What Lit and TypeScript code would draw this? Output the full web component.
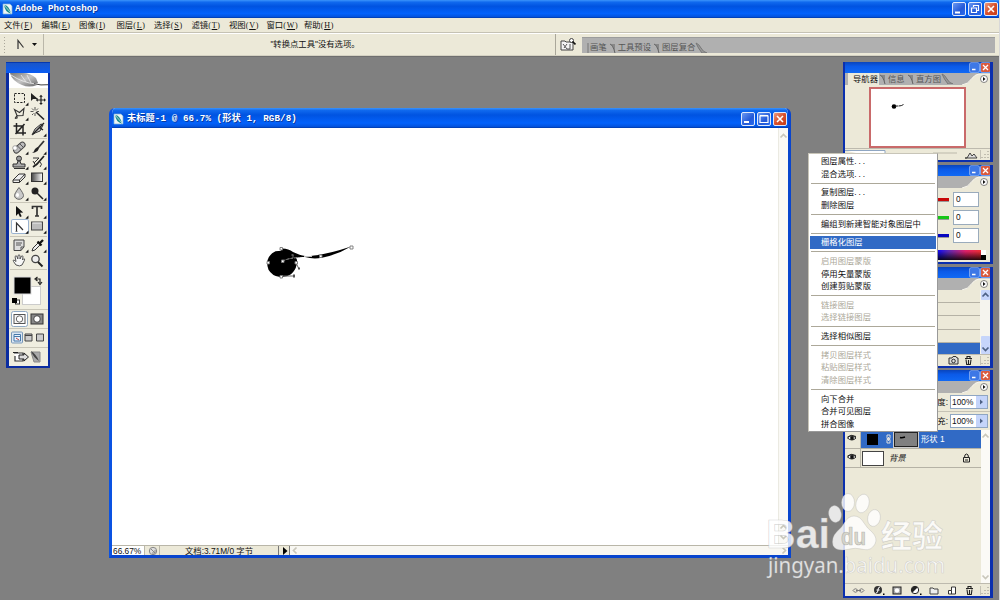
import { LitElement, html, svg, css } from "lit";
import { customElement } from "lit/decorators.js";
import { classMap } from "lit/directives/class-map.js";

const corner = svg`<path d="M18 15v-4l-4 4z" fill="#111"/>`;
const tool = (body: unknown, fly = true, on = false) => html`<span class=${classMap({ tool: true, on })}>
  <svg width="18" height="15" viewBox="0 0 18 15">${body}${fly ? svg`<g transform="translate(3.4 3) scale(.78)">${corner}</g>` : ""}</svg></span>`;

const groups = [
  [
    tool(svg`<rect x="3.5" y="2.5" width="10" height="9" fill="none" stroke="#222" stroke-dasharray="2.2 1.3"/>`),
    tool(svg`<path d="M2 2v8l2-2 5 0z" fill="#222"/><path d="M12 5v8M8 9h8" stroke="#222" stroke-width="1.2"/><path d="M12 3.8l1.8 2h-3.6zM12 14l1.8-2h-3.6zM6.8 9l2-1.7v3.4zM17 9l-2-1.7v3.4z" fill="#222"/>`, false),
    tool(svg`<path d="M4 12.5l2-3-2.5-6 5 3 4.500-4-1 7-5 .3q-2 .5-1 1.500t-2 1.200" fill="none" stroke="#333" stroke-width="1.1"/>`),
    tool(svg`<path d="M7 6l8 7.500" stroke="#222" stroke-width="1.6"/><path d="M6 1v3M6 7v3M1.500 5.500h3M8 5.500h2M3 2.500l2 2M9 2.500l-2 2M3 9l1.500-1.500" stroke="#444" stroke-width=".9"/>`, false),
    tool(svg`<path d="M5.500 1v10H15M2.500 4H12v9.500M4.500 12L13.500 2" fill="none" stroke="#222" stroke-width="1.5"/>`, false),
    tool(svg`<path d="M3 13l3-6 6-5 2 1-3 6-5 2z" fill="#ccc" stroke="#333"/><path d="M4 12L15 1M10 5l4 3" stroke="#222" stroke-width="1.400"/>`),
  ],
  [
    tool(svg`<rect x="1.500" y="5" width="13.500" height="5.500" rx="2.700" transform="rotate(-42 8 7.500)" fill="#bbb" stroke="#444"/><path d="M6 5.500l4.500 4.500M8.500 3.500l4 4" stroke="#555"/><circle cx="4" cy="8" r="2.300" fill="#fff" stroke="#777" stroke-width=".6"/>`),
    tool(svg`<path d="M15 1L9 8" stroke="#333" stroke-width="1.800"/><path d="M3 13q2-1 3-4l2.500-2L10 8.500 8.500 11Q6 13 3 13" fill="#222"/>`),
    tool(svg`<circle cx="8" cy="3.500" r="2.500" fill="#999" stroke="#333"/><path d="M7 6h2l1 3h4v3H2V9h4z" fill="#aaa" stroke="#333"/><path d="M3 13.500h11" stroke="#333"/>`),
    tool(svg`<path d="M15 1L8 9l-4 3" stroke="#222" stroke-width="1.700" fill="none"/><path d="M4 3h6L5 8M11 7q3 2 0 5M4 6l3 5" stroke="#333" fill="none"/>`),
    tool(svg`<path d="M2 10l6-6h6l-5.500 6zM2 10v2.500h6.500V10M8.500 12.500L14 7V4" fill="#eee" stroke="#333"/>`),
    tool(svg`<defs><linearGradient id="gr"><stop stop-color="#444"/><stop offset="1" stop-color="#fff"/></linearGradient></defs><rect x="2.500" y="3" width="11" height="8.500" fill="url(#gr)" stroke="#333"/>`),
    tool(svg`<path d="M8 1.500q4.500 6 4.500 8a4.400 3.700 0 0 1-9 0q0-2 4.500-8" fill="#c9c9c9" stroke="#666"/><ellipse cx="6.500" cy="9" rx="1.500" ry="2" fill="#fff"/>`),
    tool(svg`<circle cx="6" cy="5" r="3.500" fill="#222"/><path d="M8 7l6 6" stroke="#222" stroke-width="1.500"/>`),
  ],
  [
    tool(svg`<path d="M5 2v10l2.300-2.500L9 13l1.700-.8L9 8.800l3.200-.2z" fill="#111"/>`),
    tool(svg`<path d="M3.500 5V2.500h9V5M8 2.500v9M6 12h4" fill="none" stroke="#333" stroke-width="1.700"/>`),
    tool(svg`<path d="M5.500 12V4l6.500 7" fill="none" stroke="#333" stroke-width="1.200"/><path d="M4.500 12.500h2" stroke="#777"/>`, true, true),
    tool(svg`<rect x="2.500" y="3" width="11" height="8" fill="#bcbcbc" stroke="#444"/><path d="M3.500 4h9" stroke="#eee"/>`),
  ],
  [
    tool(svg`<path d="M3 2h10v7l-3 3.500H3z" fill="#ddd" stroke="#444"/><path d="M10 12.500V9h3M5 5h6M5 7h5" fill="none" stroke="#555"/>`),
    tool(svg`<path d="M3 13l1-3 6-6 2 2-6 6z" fill="#eee" stroke="#333"/><path d="M8.500 3.500l4 4M11 5l3-3" stroke="#111" stroke-width="2.300"/>`),
    tool(svg`<path d="M5 12L2.500 8.500Q1.500 7 3 7l2 1.500L4 3.500q1-1.500 2 0L6.800 6 7 2.500q1-1.300 2 0L9 6l1.500-3q1.500-.6 1.500.8L11.500 7l1.300-1.300q1.200 0 .7 1.500L11 12q-2 1.800-6 0" fill="#f7f7f7" stroke="#555"/>`, false),
    tool(svg`<circle cx="6.500" cy="6" r="3.700" fill="#eee" stroke="#444" stroke-width="1.300"/><path d="M9 9l4.500 4.500" stroke="#222" stroke-width="2"/>`, false),
  ],
];

const paletteMenu = html`<svg class="pmenu" width="28" height="12" viewBox="0 0 28 12">
  <path d="M0 12Q6 11 9 6.500 13 1 17 1H28V12z" fill="#ece9d8"/><path d="M0 12Q6 11 9 6.500 13 1 17 1H28" fill="none" stroke="#f8f6ee"/>
  <circle cx="22" cy="6" r="3.500" fill="#fff" stroke="#666" stroke-width=".8"/><path d="M21 4l2.500 2-2.500 2z" fill="#111"/></svg>`;
const winBtns = html`<i class="mini"><svg width="9" height="9" viewBox="0 0 9 9"><path d="M2 6.500h3.500" stroke="#fff" stroke-width="1.600"/></svg></i>
  <i class="mini red"><svg width="9" height="9" viewBox="0 0 9 9"><path d="M2 2l5 5M7 2L2 7" stroke="#fff" stroke-width="1.300"/></svg></i>`;
const grip = html`<svg class="grip" width="9" height="9" viewBox="0 0 9 9"><path d="M7 1v1M7 4v1M7 7v1M4 4v1M4 7v1M1 7v1" stroke="#aaa79a" stroke-width="1.300"/></svg>`;
const chev = (up: boolean, c = "#c9c7bb") => html`<svg width="9" height="10" viewBox="0 0 9 10"><path d=${up ? "M1.500 6.500l3-3 3 3" : "M1.500 3.500l3 3 3-3"} fill="none" stroke=${c} stroke-width="1.700"/></svg>`;
const psIcon = html`<svg class="ps" width="11" height="12" viewBox="0 0 11 12"><path d="M1 1h7l2 2v8H1z" fill="#eef5f5" stroke="#7bb3d8" stroke-width=".7"/><path d="M2 2q5 0 7 8.500-6-1-7-8.500" fill="#188c8c"/><path d="M2 2l7 8" stroke="#fff" stroke-width=".6"/></svg>`;
const trash = svg`<path d="M2 3.500h7M4 3V1.500h3V3M3 4.500l.7 5h3.600L8 4.500M5.500 5v4" fill="none" stroke="#222" stroke-width="1.100"/>`;
const eye = html`<svg width="10" height="8" viewBox="0 0 10 8"><path d="M.5 4q4-4.500 8.500 0-4 4-8.500 0" fill="#fff" stroke="#222"/><circle cx="5" cy="4" r="1.900" fill="#111"/><path d="M.5 3Q4 0 9 2.500" fill="none" stroke="#222"/></svg>`;

const menus: [string, string][] = [["文件", "F"], ["编辑", "E"], ["图像", "I"], ["图层", "L"], ["选择", "S"], ["滤镜", "T"], ["视图", "V"], ["窗口", "W"], ["帮助", "H"]];
const context: [string, string?][][] = [
  [["图层属性..."], ["混合选项..."]],
  [["复制图层..."], ["删除图层"]],
  [["编组到新建智能对象图层中"]],
  [["栅格化图层", "sel"]],
  [["启用图层蒙版", "off"], ["停用矢量蒙版"], ["创建剪贴蒙版"]],
  [["链接图层", "off"], ["选择链接图层", "off"]],
  [["选择相似图层"]],
  [["拷贝图层样式", "off"], ["粘贴图层样式", "off"], ["清除图层样式", "off"]],
  [["向下合并"], ["合并可见图层"], ["拼合图像"]],
];

@customElement("app-root")
export class AppRoot extends LitElement {
  static styles = css`
    :host { display: block; width: 1000px; height: 600px; overflow: hidden; }
    * { box-sizing: border-box; }
    svg { display: block; flex: none; }
    .screen { position: relative; width: 1000px; height: 600px; background: #808080; font: 8.33px/12px "Liberation Sans", "Noto Sans CJK SC", sans-serif; color: #111; display: flex; flex-direction: column; overflow: hidden; border-right: 1px solid #d8d8d8; white-space: nowrap; }
    .title { height: 18px; flex: none; display: flex; align-items: center; padding: 0 1px 0 2px; gap: 2px; color: #fff; background: linear-gradient(#3b94fb 0, #1069ee 12%, #0053e1 35%, #0362fb 75%, #0354e0 92%, #0038a8); }
    .name { font: bold 9.2px/14px "Liberation Mono", "Noto Sans CJK SC", monospace; text-shadow: 1px 1px 0 #0a3a9c; flex: 1; }
    .btn { width: 14px; height: 14px; border: 1px solid #dfe9fb; border-radius: 2px; background: linear-gradient(135deg, #6a98f2, #2359d8 60%, #2b6bee); }
    .btn.red { background: linear-gradient(135deg, #eb9a80, #d8502c 50%, #c53c17); }
    .menubar { height: 15px; flex: none; background: #ece9d8; border-bottom: 1px solid #c5c2b4; display: flex; padding: 1px 0 0 4px; }
    .menubar span { width: 37.5px; }
    .menubar b { font: 8px/12px "Liberation Serif", serif; letter-spacing: .8px; }
    .options { height: 23px; flex: none; background: #ece9d8; border-top: 1px solid #fff; border-bottom: 1px solid #d5d2c3; display: flex; align-items: center; box-shadow: 0 1px 0 #6f6f6f; }
    .opt-tool { width: 44px; height: 21px; border-right: 1px solid #bab7a9; padding: 2px 0 0 4px; display: flex; }
    .opt-text { width: 512px; height: 21px; border-right: 1px solid #aaa79a; text-align: center; line-height: 21px; padding-left: 31px; }
    .opt-file { width: 26px; padding-left: 4px; }
    .well { width: 413px; height: 16px; background: #b0b0b0; border-top: 1px solid #9c9c9c; display: flex; align-items: flex-end; color: #555; padding-left: 5px; }
    .well span { line-height: 11px; }
    .win { position: absolute; display: flex; flex-direction: column; }
    .toolbox { left: 6px; top: 62px; width: 44px; height: 306px; border: solid #0a2ca0; border-width: 0 2px 2px 3px; background: #f0eee0; }
    .tb-title { height: 11px; flex: none; background: linear-gradient(#1a55c8, #0a5cf4); margin: 0 -2px 0 -3px; border-top: 1px solid #0538b0; }
    .feather { height: 15px; background: #fff; flex: none; overflow: hidden; }
    .grid { display: grid; grid-template-columns: 18px 18px; grid-auto-rows: 15.3px; padding: 1px 0 1px 1px; border-bottom: 1px solid #c9c6b8; margin: 0 1px; }
    .grid.first { padding-top: 3px; }
    .tool { display: block; width: 18px; height: 15px; }
    .tool.on { background: #fff; box-shadow: inset 0 0 0 1px #9ab2cf; border-radius: 2px; }
    .swatches { height: 40px; padding: 6px 3px 0; border-bottom: 1px solid #c9c6b8; flex: none; }
    .masks { height: 19px; display: flex; gap: 1px; align-items: center; padding-left: 2px; border-bottom: 1px solid #c9c6b8; flex: none; }
    .masks.last { border: 0; height: 17px; }
    .doc { left: 109px; top: 108px; width: 682px; height: 450px; border: 3px solid #0845ce; border-top: 0; border-left-color: #0a52e2; border-radius: 6px 6px 0 0; background: #fff; overflow: hidden; }
    .doc-title { height: 20px; margin: 0 -3px; padding: 2px 4px 0 4px; gap: 2px; }
    .doc-title .name { letter-spacing: .1px; padding-left: 1px; }
    .body { flex: 1; display: flex; min-height: 0; }
    .canvas { flex: 1; background: #fff; }
    .vscroll { width: 10px; background: #faf9f5; border-left: 1px solid #ebeae2; display: flex; flex-direction: column; justify-content: space-between; padding: 3px 0; flex: none; }
    .status { height: 10px; flex: none; display: flex; background: #ece9d8; line-height: 10px; border-top: 1px solid #b9b6a8; }
    .status .zoom { width: 32px; background: #fff; padding-left: 1px; }
    .status .ic { width: 16px; border: solid #b9b6a8; border-width: 0 1px; padding-left: 3px; }
    .status .info { width: 118px; text-align: center; }
    .status .go { width: 12px; border: solid #777; border-width: 0 1px; padding: 1px 0 0 4px; }
    .status .hs { flex: 1; background: #f8f7f2; display: flex; justify-content: space-between; }
    .turn { display: block; transform: rotate(-90deg); }
    .pal { left: 843px; width: 150px; border: solid #0a2fae; border-width: 0 3px 2px 2px; background: #ece9d8; overflow: hidden; }
    .nav { top: 62px; height: 100px; }
    .color { top: 165px; height: 99px; }
    .history { top: 267px; height: 101px; }
    .layers { top: 370px; height: 228px; }
    .ptitle { height: 11px; flex: none; margin: 0 -3px 0 -2px; background: linear-gradient(#0a45bc, #0b5ae8 40%, #1069f4); display: flex; gap: 2px; justify-content: flex-end; align-items: center; padding-right: 3px; }
    .mini { width: 9px; height: 9px; border-radius: 1px; background: #3e78e6; box-shadow: 0 0 0 .6px #bcd0f5; overflow: hidden; }
    .mini.red { background: #d95b3f; }
    .tabs { height: 12px; flex: none; display: flex; background: #b0b0b0; align-items: stretch; color: #555; line-height: 12px; }
    .pmenu { margin-left: auto; }
    .tab-on { background: #ece9d8; color: #111; padding-left: 5px; width: 31px; margin-left: 3px; }
    .thumbwrap { flex: 1; display: flex; padding: 2px 0 0 24px; }
    .thumb { width: 97px; height: 61px; border: 2px solid #c96a6a; background: #fff; }
    .pfoot { height: 12px; flex: none; display: flex; align-items: center; border-top: 1px solid #bdbaae; }
    .pfoot .grip { border-left: 1px solid #c5c2b5; margin-left: auto; width: 10px; }
    .srows { flex: 1; display: flex; flex-direction: column; padding-top: 4px; gap: 3px; }
    .srow { display: flex; height: 15px; align-items: center; justify-content: flex-end; padding-right: 11px; gap: 4px; }
    .bar { width: 18px; height: 4px; border-bottom: 1px solid #999; }
    .bar.r { background: #c80808; } .bar.g { background: #18c618; } .bar.b { background: #0606c0; }
    .num { width: 26px; height: 15px; background: #fff; border: 1px solid #9aabbc; padding-left: 2px; line-height: 13px; }
    .ramp { height: 10px; margin: 0 4px 2px 5px; display: flex; background: linear-gradient(transparent 10%, rgba(0,0,0,.85)), linear-gradient(90deg, #f00, #ff0, #0f0, #0ff 50%, #00f 63%, #5a2ab8 72%, #e0206a 85%, #f03030 97%); }
    .ramp i { margin-left: auto; width: 5px; background: linear-gradient(#fff 50%, #000 50%); }
    .hist { flex: 1; display: flex; min-height: 0; }
    .hrows { flex: 1; display: flex; flex-direction: column; }
    .hrow { height: 13.2px; border-bottom: 1px solid #b5b2a5; }
    .hrow.on { background: #316ac5; border: 0; flex: 1; }
    .hsc { width: 10px; background: #f5f4ee; display: flex; flex-direction: column; align-items: center; }
    .hsc span { background: #c6d5fb; width: 9px; border-radius: 1px; }
    .sp { flex: 1; }
    .field { height: 19px; flex: none; display: flex; justify-content: flex-end; align-items: center; padding-right: 2px; gap: 1px; border-bottom: 1px solid #c5c2b5; }
    .field.low { height: 18px; border: 0; }
    .pct { width: 38px; height: 14px; border: 1px solid #8fa6c2; background: #fff; display: flex; line-height: 12px; padding-left: 1px; margin-left: 1px; }
    .pct i { margin-left: auto; width: 11px; background: #c4d4fa; padding: 2px 0 0 2px; }
    .llist { flex: 1; display: flex; min-height: 0; }
    .lrows { flex: 1; }
    .lsc { width: 9px; background: #fbfaf6; display: flex; flex-direction: column; justify-content: space-between; padding: 1px 0; }
    .lrow { height: 19px; display: flex; align-items: center; border-bottom: 1px solid #b5b2a5; }
    .eye { width: 16px; height: 18px; padding: 4px 0 0 2px; border-right: 1px solid #bbb8aa; flex: none; background: #ece9d8; }
    .lrow.on { background: #316ac5; color: #fff; }
    .lt { width: 22px; height: 15px; border: 1px solid #444; background: #fff; margin: 0 5px 0 1px; }
    .lrow.on .lt { width: 11px; height: 11px; background: #000; margin: 0 8px 0 6px; border: 0; }
    .mask { width: 24px; height: 15px; background: #808080; border: 1px solid #222; outline: 1px solid #ccc; margin: 0 3px; }
    .lock { margin-left: auto; margin-right: 10px; }
    .lfoot { height: 13px; }
    .lfoot .icons { flex: 1; display: flex; justify-content: space-between; padding: 0 5px 0 7px; }
    .ctx { left: 808px; top: 153px; width: 130px; height: 279px; background: #fff; border: 1px solid #c8c5b8; border-right-color: #999; border-bottom-color: #999; padding: 1px 1px; }
    .item { height: 12.5px; line-height: 12.5px; padding-left: 11px; }
    .item.sel { background: #316ac5; color: #fff; }
    .item.off { color: #aca899; }
    .dots { letter-spacing: 1.9px; }
    .sep { height: 6.25px; padding-top: 2.6px; }
    .sep::after { content: ""; display: block; height: 1px; background: #aca899; margin: 0 1px; }
    .mark { position: absolute; left: 760px; top: 486px; }
    .wb { font: bold 41px "Liberation Sans", sans-serif; }
    .wdu { font: bold 23px "Liberation Sans", sans-serif; }
    .wc { font: bold 31px "Noto Sans CJK SC", sans-serif; }
    .wu { font: 21px "Noto Sans", sans-serif; }
  `;

  private palette(cls: string, tabs: unknown, body: unknown) {
    return html`<section class="win pal ${cls}"><div class="ptitle">${winBtns}</div><div class="tabs">${tabs}${paletteMenu}</div>${body}</section>`;
  }

  private toolbox() {
    return html`<section class="win toolbox">
      <div class="tb-title"></div>
      <div class="feather"><svg width="39" height="15" viewBox="0 0 39 15"><defs><linearGradient id="fe" x2="1" y2="1"><stop stop-color="#777"/><stop offset=".5" stop-color="#c4c4c4"/><stop offset="1" stop-color="#666"/></linearGradient></defs>
        <path d="M1 0Q3 8 13 12q7 3 15 0l-3-1 4-1-2-5Q21 0 14 0z" fill="url(#fe)"/><path d="M2 2q12 8 25 9l12 .8M12 2l5 7M18 2l4 8" fill="none" stroke="#eee" stroke-width=".8"/><path d="M25 10.700q7 2 14 1" fill="none" stroke="#444"/></svg></div>
      ${groups.map((g, i) => html`<div class=${classMap({ grid: true, first: i === 0 })}>${g}</div>`)}
      <div class="swatches"><svg width="32" height="30" viewBox="0 0 32 30"><rect x="10.500" y="10.500" width="18" height="18" fill="#fff" stroke="#ccc"/><rect x="2" y="1" width="17" height="17" fill="#000" stroke="#ddd"/><path d="M24 3h4v4M25.500 1L23 3l2.500 2M26 6l2 2.500L30 6" fill="none" stroke="#222" stroke-width="1.200"/><rect x="3.500" y="24" width="4" height="4" fill="#fff" stroke="#333"/><rect x="0" y="22" width="5" height="5" fill="#000"/></svg></div>
      <div class="masks"><svg width="36" height="16" viewBox="0 0 36 16"><rect x=".5" y=".5" width="16" height="15" rx="2" fill="#fff" stroke="#8fa9c4"/><rect x="3" y="3.500" width="11" height="9" fill="#f8f8f8" stroke="#555"/><circle cx="8.500" cy="8" r="3.200" fill="#fff" stroke="#666"/><rect x="20" y="3" width="12" height="10" fill="#888" stroke="#333"/><circle cx="26" cy="8" r="3.300" fill="#fff" stroke="#444"/></svg></div>
      <div class="masks"><svg width="36" height="14" viewBox="0 0 36 14"><rect x=".5" y="1" width="11" height="11" rx="1" fill="#dbe7f4" stroke="#7897b8"/><path d="M3 3.500h6.500v6.500H3zM3 5.500h6.500" fill="#e8f2ff" stroke="#4678a8"/><path d="M5 7l3 2" stroke="#b44"/><path d="M14 3h7v7h-7zM14 4.500h7M25.500 3h7v7h-7z" fill="#ccc" stroke="#444"/></svg></div>
      <div class="masks last"><svg width="36" height="15" viewBox="0 0 36 15"><path d="M3 4h9v8H4V7" fill="#fff" stroke="#333" stroke-width="1.200"/><path d="M2 3.500h5M8 6h5V4l4.500 4-4.500 4v-2H8z" fill="#ddd" stroke="#222"/><path d="M20 3h9v10h-6z" fill="#aaa" stroke="#888"/><path d="M20 2q5 3 8 10-6-4-8-10" fill="#444"/></svg></div>
    </section>`;
  }

  private document() {
    return html`<section class="win doc">
      <div class="title doc-title">${psIcon}<span class="name">未标题-1 @ 66.7% (形状 1, RGB/8)</span>
        <i class="btn"><svg width="12" height="12" viewBox="0 0 12 12"><path d="M2 9h5" stroke="#fff" stroke-width="2"/></svg></i>
        <i class="btn"><svg width="12" height="12" viewBox="0 0 12 12"><path d="M2 3h8v6.500H2zM2 2.500h8" fill="none" stroke="#fff" stroke-width="1.200"/></svg></i>
        <i class="btn red"><svg width="12" height="12" viewBox="0 0 12 12"><path d="M3 3l6 6M9 3L3 9" stroke="#fff" stroke-width="1.600"/></svg></i>
      </div>
      <div class="body"><div class="canvas"><svg width="660" height="400" viewBox="112 128 660 400">
        <path d="M281 248.500Q288 248 293 252q6 3 12 4 4 .4 9-.4 16-2 37-9.100-13 8-29 11.300-9 1.700-17-.8-5-.4-9 .8 2 3 .5 7.500-1 5-5.500 9-5 3.500-12 2.500-7-1-10.500-7-2-5-1-9.500 2-6.500 8-9 3-.5 5.500-.5z" fill="#000"/>
        <path d="M304 256.500h8" stroke="#bbb"/><path d="M283 261q5-3 17-3.500" fill="none" stroke="#aaa" stroke-width=".9" stroke-dasharray="3 1"/>
        <path d="M282 276h12M296 263l3 6M293 255v3" stroke="#666"/><g fill="#fff" stroke="#777" stroke-width=".9"><path d="M280 247.500h2.500v2.500h-2.500zM267 261.500h2.500v2.500H267zM281.500 260h2.500v2.500h-2.500zM295 261.500h2.500v2.500H295zM280 275.500h2.500v2.500h-2.500zM319.500 255h2.500v2.500h-2.500zM350 246h3v3h-3z"/></g><path d="M293 274.500h2v3h-2zM298 267.500h2v2h-2zM291.500 254h2v2h-2z" fill="#555"/></svg></div>
        <div class="vscroll">${chev(true)}<span>${chev(true)}${chev(false)}</span></div></div>
      <div class="status"><span class="zoom">66.67%</span><span class="ic"><svg width="10" height="10" viewBox="0 0 10 10"><circle cx="5" cy="5" r="3.700" fill="#ddd" stroke="#888"/><path d="M3 3l4 4M7 4v3H4" stroke="#888" fill="none"/></svg></span><span class="info">文档:3.71M/0 字节</span><span class="go"><svg width="6" height="8" viewBox="0 0 6 8"><path d="M0 0l4.500 4L0 8z"/></svg></span><span class="hs"><i class="turn">${chev(true)}</i><i class="turn">${chev(false)}</i></span></div>
    </section>`;
  }

  render() {
    const slash = html`<svg width="9" height="11" viewBox="0 0 9 11"><path d="M1 2q3 1 5 9V2z" fill="#888"/><path d="M1 2q3 1 5 9" fill="none" stroke="#666"/></svg>`;
    const slope = html`<svg width="14" height="11" viewBox="0 0 14 11"><path d="M1 1q3 1 5 5 2 4 6 5H7Q3 6 1 1" fill="#999" stroke="#777"/></svg>`;
    const arrow = html`<svg width="7" height="8" viewBox="0 0 7 8"><path d="M2 1.500L5 4 2 6.500z" fill="#4d6185"/></svg>`;
    return html`<main class="screen">
      <div class="title">${psIcon}<span class="name">Adobe Photoshop</span>
        <i class="btn"><svg width="12" height="12" viewBox="0 0 12 12"><path d="M2 9.500h5" stroke="#fff" stroke-width="2"/></svg></i>
        <i class="btn"><svg width="12" height="12" viewBox="0 0 12 12"><path d="M4.500 4V2.500h5v5H8M2.500 5h5v4.500h-5z" fill="none" stroke="#fff" stroke-width="1.200"/></svg></i>
        <i class="btn red"><svg width="12" height="12" viewBox="0 0 12 12"><path d="M3 3l6 6M9 3L3 9" stroke="#fff" stroke-width="1.600"/></svg></i></div>
      <nav class="menubar">${menus.map(([n, k]) => html`<span>${n}<b>(<u>${k}</u>)</b></span>`)}</nav>
      <div class="options">
        <div class="opt-tool"><svg width="36" height="18" viewBox="0 0 36 18"><path d="M.5 1v16" stroke="#aaa79a" stroke-dasharray="1 2"/><path d="M14 12.500V4.500l5.500 7" fill="none" stroke="#333" stroke-width="1.200"/><path d="M13 12.500h2" stroke="#777"/><path d="M28 7h5l-2.500 3z" fill="#111"/></svg></div>
        <div class="opt-text">"转换点工具"没有选项。</div>
        <div class="opt-file"><svg width="16" height="16" viewBox="0 0 16 16"><path d="M1 4h4l1 1h7v8H1z" fill="#f4f4f4" stroke="#444"/><path d="M3 7l4 5M7 7l-3 4M7 12h3V7" fill="none" stroke="#555"/><circle cx="11.500" cy="3.500" r="2" fill="#fff" stroke="#444"/><path d="M12.500 4.500l3 3" stroke="#111" stroke-width="1.700"/></svg></div>
        <div class="well"><svg width="3" height="11"><path d="M1 1v10" stroke="#777"/></svg><span>画笔</span><svg width="2" height="1"></svg>${slash}<span>工具预设</span><svg width="2" height="1"></svg>${slash}<span>图层复合</span>${slope}</div>
      </div>
      ${this.toolbox()}
      ${this.document()}
      ${this.palette("nav", html`<span class="tab-on">导航器</span>${slash}<span>信息</span>&nbsp;${slash}<span>直方图</span>${slope}`, html`
        <div class="thumbwrap"><div class="thumb"><svg width="93" height="57" viewBox="0 0 93 57"><circle cx="23" cy="17.500" r="2.300"/><path d="M24 17h3M27.500 17q3 0 5-1.500" fill="none" stroke="#222"/></svg></div></div>
        <div class="pfoot"><svg width="134" height="10" viewBox="0 0 134 10"><path d="M0 .5h40v9" fill="#fff" stroke="#8fa6c2"/><path d="M88 3h24" stroke="#bbb8aa"/><path d="M120 8h12l-3-4-2 2-2-3-3 5z" fill="#ddd" stroke="#333" stroke-width=".9"/></svg>${grip}</div>`)}
      ${this.palette("color", "", html`
        <div class="srows">${["r", "g", "b"].map((c) => html`<div class="srow"><span class="bar ${c}"></span><span class="num">0</span></div>`)}</div><div class="ramp"><i></i></div>`)}
      ${this.palette("history", "", html`
        <div class="hist"><div class="hrows"><div class="hrow"></div><div class="hrow"></div><div class="hrow"></div><div class="hrow"></div><div class="hrow on"></div></div>
        <div class="hsc"><span>${chev(true, "#4d6185")}</span><i class="sp"></i><span><svg width="9" height="8"></svg></span><span>${chev(false, "#4d6185")}</span></div></div>
        <div class="pfoot"><i class="sp"></i><svg width="32" height="11" viewBox="0 0 32 11"><path d="M1 3h3l1-1.500h3L9 3h1v6H1z" fill="#ddd" stroke="#333"/><circle cx="5.500" cy="6" r="1.800" fill="none" stroke="#333"/><g transform="translate(15)">${trash}</g></svg>${grip}</div>`)}
      ${this.palette("layers", "", html`
        <div class="field">不透明度:<span class="pct">100%<i>${arrow}</i></span></div>
        <div class="field low">填充:<span class="pct">100%<i>${arrow}</i></span></div>
        <div class="llist"><div class="lrows">
          <div class="lrow on"><span class="eye">${eye}</span><span class="lt"></span><svg width="5" height="10" viewBox="0 0 5 10"><path d="M1 1h3v3.500H1zM1 5.500h3V9H1zM2.500 3v4" fill="none" stroke="#ddd"/></svg><span class="mask"><svg width="20" height="13"><path d="M5 4.500q2 .5 5-.5" stroke="#000" fill="none" stroke-width="1.500"/></svg></span>形状 1</div>
          <div class="lrow"><span class="eye">${eye}</span><span class="lt"></span><i>背景</i><svg class="lock" width="9" height="10" viewBox="0 0 9 10"><path d="M1.500 4.500h6V9h-6zM2.500 4.500Q2.500 1 4.500 1t2 3.500M3 7h3" fill="none" stroke="#222"/></svg></div>
        </div><div class="lsc">${chev(true)}${chev(false)}</div></div>
        <div class="pfoot lfoot"><span class="icons">
          <svg width="13" height="11" viewBox="0 0 13 11"><path d="M1 5.500q2.500-3.500 5 0-2.500 3.500-5 0M7 5.500q2.500-3.500 5 0-2.500 3.500-5 0M4 5.500h5" fill="none" stroke="#777"/></svg>
          <svg width="12" height="11" viewBox="0 0 12 11"><circle cx="5" cy="5" r="4" fill="#333"/><path d="M7 2Q5 2 5 5T3 8M3.500 5h3" stroke="#fff" fill="none"/><path d="M10 8.500h1.500V10H10z"/></svg>
          <svg width="10" height="11" viewBox="0 0 10 11"><rect x="1" y="2" width="8" height="7" fill="#aaa" stroke="#222"/><circle cx="5" cy="5.500" r="2.200" fill="#fff"/></svg>
          <svg width="12" height="11" viewBox="0 0 12 11"><circle cx="5" cy="5" r="3.700" fill="#fff" stroke="#222"/><path d="M2.500 7.500a3.500 3.500 0 0 1 5-5z" fill="#222"/><path d="M10 8.500h1.500V10H10z"/></svg>
          <svg width="10" height="11" viewBox="0 0 10 11"><path d="M1 3h3l1 1h4v5H1z" fill="#eee" stroke="#444"/></svg>
          <svg width="10" height="11" viewBox="0 0 10 11"><path d="M1.500 5.500h3V2h4v7h-7z" fill="#fff" stroke="#333"/><path d="M4.500 5.500V9" stroke="#333"/></svg>
          <svg width="11" height="11" viewBox="0 0 11 11">${trash}</svg></span>${grip}</div>`)}
      <div class="win ctx">${context.map((g, i) => html`${i ? html`<div class="sep"></div>` : ""}${g.map(([t, s]) => html`<div class="item ${s ?? ""}">${t.replace("...", "")}${t.endsWith("...") ? html`<span class="dots">...</span>` : ""}</div>`)}`)}</div>
      <svg class="mark" width="240" height="114" viewBox="760 486 240 114" fill="#fff" fill-opacity=".82" stroke="#aaa" stroke-opacity=".45" stroke-width=".7">
        <text class="wb" x="766" y="548" textLength="64">Bai</text>
        <ellipse cx="835" cy="514" rx="6.300" ry="8.500" transform="rotate(-10 835 514)"/><ellipse cx="848" cy="502.500" rx="6.500" ry="9"/><ellipse cx="862.500" cy="503.500" rx="6.500" ry="9.500" transform="rotate(15 862.500 503.500)"/><ellipse cx="874" cy="518" rx="6.300" ry="8.500" transform="rotate(12 874 518)"/>
        <path d="M854 516q6 0 10 7 3 5 8 9 6 6 3 12-4 7-11 5.500-9-2.500-17 0-11 2-14-4-2-8 4-14 5-4 7.500-9 4-6.500 9.500-6.500z"/>
        <text class="wdu" x="841" y="545" fill="#d5d3c6" fill-opacity=".9" stroke="#999" stroke-opacity=".6" textLength="25" lengthAdjust="spacingAndGlyphs">du</text>
        <text class="wc" x="881" y="547">经验</text>
        <text class="wu" x="768" y="573" textLength="177" lengthAdjust="spacingAndGlyphs">jingyan.baidu.com</text>
      </svg>
    </main>`;
  }
}
